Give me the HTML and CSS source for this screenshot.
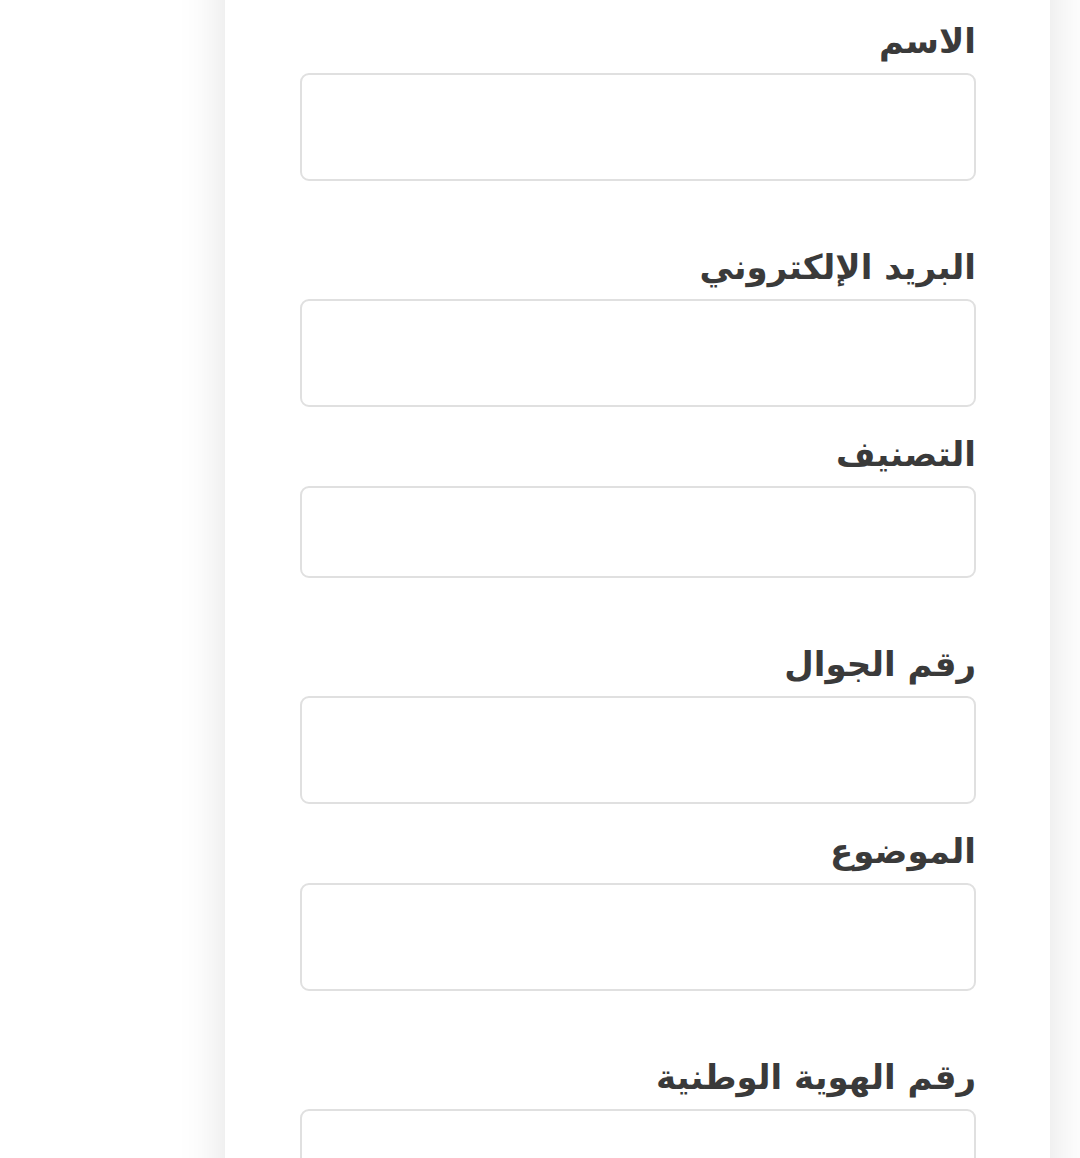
FILE: index.html
```html
<!DOCTYPE html>
<html lang="ar" dir="rtl">
<head>
<meta charset="utf-8">
<title>نموذج</title>
<link rel="stylesheet" href="styles.css">
</head>
<body>
<div class="page">
  <div class="card">
    <form class="form">
      <div class="field">
        <label class="label">الاسم</label>
        <input class="input" type="text">
      </div>
      <div class="field field-loose">
        <label class="label">البريد الإلكتروني</label>
        <input class="input" type="email">
      </div>
      <div class="field">
        <label class="label">التصنيف</label>
        <div class="input input-select"></div>
      </div>
      <div class="field field-loose">
        <label class="label">رقم الجوال</label>
        <input class="input" type="tel">
      </div>
      <div class="field">
        <label class="label">الموضوع</label>
        <input class="input" type="text">
      </div>
      <div class="field field-loose">
        <label class="label">رقم الهوية الوطنية</label>
        <input class="input" type="text">
      </div>
    </form>
  </div>
</div>
</body>
</html>
```
FILE: styles.css
```css
html, body {
  margin: 0;
  padding: 0;
  background: #ffffff;
  overflow: hidden;
}
body {
  font-family: "DejaVu Sans", "Noto Sans", sans-serif;
}
.page {
  height: 1158px;
  overflow: hidden;
  display: flex;
  justify-content: flex-start;
}
.card {
  margin-right: 30px;
  width: 825px;
  background: #ffffff;
  box-shadow: 0 0 45px rgba(0, 0, 0, 0.12);
  margin-top: -60px;
  padding: 81px 74px 200px 75px;
  box-sizing: border-box;
  height: 1400px;
}
.form {
  display: flex;
  flex-direction: column;
}
.field {
  display: flex;
  flex-direction: column;
  margin-top: 27px;
}
.field:first-child {
  margin-top: 0;
}
.field-loose {
  margin-top: 66px;
}
.label {
  display: block;
  font-size: 34px;
  line-height: 40px;
  font-weight: bold;
  color: #3a3a3a;
  margin-bottom: 12px;
  text-align: right;
}
.input {
  display: block;
  box-sizing: border-box;
  width: 100%;
  height: 108px;
  border: 2px solid #e0e0e0;
  border-radius: 9px;
  background: #fff;
  margin: 0;
  padding: 0 16px;
  outline: none;
}
.input-select {
  height: 92px;
}
```
